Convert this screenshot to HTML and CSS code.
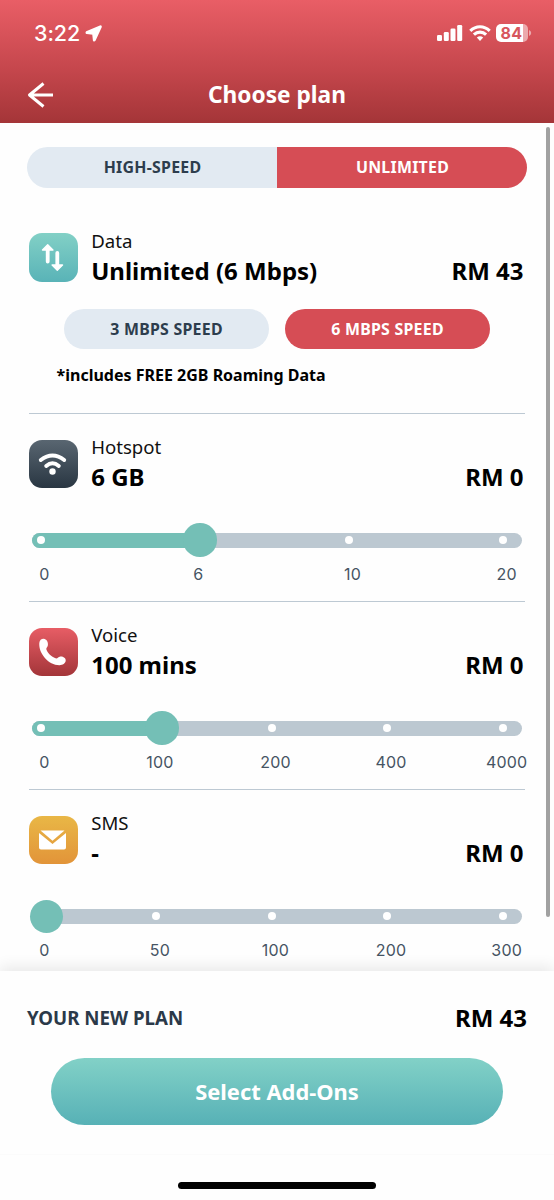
FILE: index.html
```html
<!DOCTYPE html>
<html lang="en">
<head>
<meta charset="utf-8">
<title>Choose plan</title>
<link rel="stylesheet" href="styles.css">
</head>
<body>
<div class="screen">
  <header class="header">
    <div class="status">
      <span class="time">3:22</span>
      <svg class="location" width="17" height="17" viewBox="0 0 17 17"><path d="M15.200 1.200 1.500 7Q1 8 1.800 8.300L8 9 8.700 15.300Q9.200 16.200 9.800 15.300L16 1.800Q16 1 15.200 1.200Z" fill="#fff" stroke="#fff" stroke-width="1.600" stroke-linejoin="round"/></svg>
      <svg class="signal" width="26" height="16" viewBox="0 0 26 16" fill="#fff"><rect x="0" y="10" width="5" height="6" rx="1.300"/><rect x="6.800" y="7" width="5" height="9" rx="1.300"/><rect x="13.500" y="3.500" width="5" height="12.500" rx="1.300"/><rect x="20.200" y="0" width="5" height="16" rx="1.300"/></svg>
      <svg class="wifi" width="22" height="16" viewBox="0 0 22 16"><g fill="none" stroke="#fff" stroke-width="3.100"><path d="M1.300 5.900Q5.500 1.700 11 1.700T20.700 5.900"/><path d="M4.900 9.700Q7.600 7.100 11 7.100T17.100 9.700"/></g><path d="M7.800 12.500Q11 9.900 14.200 12.500L11 15.900Z" fill="#fff"/></svg>
      <span class="battery"><span class="level">84</span></span>
      <svg class="cap" width="3" height="6" viewBox="0 0 3 6"><path d="M0 0Q2.200 1 2.200 3T0 6Z" fill="#fff" fill-opacity=".5"/></svg>
    </div>
    <div class="nav">
      <svg class="back" width="27" height="26" viewBox="0 0 27 26"><path d="M16.500 1.500 2.500 13 16.500 24.500M3 13H26" fill="none" stroke="#fff" stroke-width="3" stroke-linejoin="round"/></svg>
      <h1 class="title">Choose plan</h1>
    </div>
  </header>

  <main class="content">
    <div class="scrollbar"></div>
    <div class="toggle">
      <div class="option">HIGH-SPEED</div>
      <div class="option active">UNLIMITED</div>
    </div>

    <section class="plan data">
      <div class="row">
        <div class="icon teal">
          <svg width="48" height="48" viewBox="0 0 48 48" fill="#fff" stroke="#fff" stroke-linecap="round" stroke-linejoin="round"><path d="M18.700 28.500V15M28.300 20V33" fill="none" stroke-width="3.800"/><path d="M13.500 17 18.700 11.800 23.900 17ZM23.100 32 28.300 37.200 33.500 32Z" stroke-width="1.400"/></svg>
        </div>
        <div class="info"><span class="label">Data</span><span class="value">Unlimited (6 Mbps)</span></div>
        <span class="price">RM 43</span>
      </div>
      <div class="speeds">
        <div class="pill">3 MBPS SPEED</div>
        <div class="pill active">6 MBPS SPEED</div>
      </div>
      <p class="note">*includes FREE 2GB Roaming Data</p>
    </section>

    <section class="plan">
      <div class="row">
        <div class="icon slate">
          <svg width="48" height="48" viewBox="0 0 48 48"><g fill="none" stroke="#fff" stroke-linecap="round" stroke-width="3.900"><path d="M11.800 20Q23.500 10.800 35.200 20"/><path d="M17.200 26Q23.500 20.600 29.800 26"/></g><circle cx="23.500" cy="31.500" r="3.200" fill="#fff"/></svg>
        </div>
        <div class="info"><span class="label">Hotspot</span><span class="value">6 GB</span></div>
        <span class="price">RM 0</span>
      </div>
      <div class="track"><div class="fill" style="width:168px"></div><i class="dot"></i><i class="dot"></i><i class="dot"></i><i class="dot"></i><div class="knob" style="left:168px"></div></div>
      <div class="ticks"><span>0</span><span>6</span><span>10</span><span>20</span></div>
    </section>

    <section class="plan">
      <div class="row">
        <div class="icon red">
          <svg width="48" height="48" viewBox="0 0 48 48"><path d="M10.300 15C10.500 12 12.500 10.600 14.800 10.700C17.400 10.900 19.300 14 18.900 17C18.700 19.500 16.800 19.600 17.500 21.800C18.600 25.100 22.500 28.800 26.500 30.300C28.500 31 29.200 28.800 31.200 28.500C34 28.200 37.100 30 36.700 32.800C36.400 35.600 33.700 37.100 30.500 37.200C19.500 37.300 9.500 25.500 10.300 15Z" fill="#fff"/></svg>
        </div>
        <div class="info"><span class="label">Voice</span><span class="value">100 mins</span></div>
        <span class="price">RM 0</span>
      </div>
      <div class="track"><div class="fill" style="width:130.200px"></div><i class="dot"></i><i class="dot"></i><i class="dot"></i><i class="dot"></i><i class="dot"></i><div class="knob" style="left:130.200px"></div></div>
      <div class="ticks"><span>0</span><span>100</span><span>200</span><span>400</span><span>4000</span></div>
    </section>

    <section class="plan last">
      <div class="row">
        <div class="icon amber">
          <svg width="48" height="48" viewBox="0 0 48 48" fill="#fff"><path d="M11.500 14.500H35.500L23.500 24.800Z"/><path d="M10 17 23.500 28 37 17V31.500Q37 33.500 35 33.500H12Q10 33.500 10 31.500Z"/></svg>
        </div>
        <div class="info"><span class="label">SMS</span><span class="value">-</span></div>
        <span class="price">RM 0</span>
      </div>
      <div class="track"><i class="dot"></i><i class="dot"></i><i class="dot"></i><i class="dot"></i><i class="dot"></i><div class="knob" style="left:14.300px"></div></div>
      <div class="ticks"><span>0</span><span>50</span><span>100</span><span>200</span><span>300</span></div>
    </section>
  </main>

  <footer class="footer">
    <div class="summary"><span class="plan-title">YOUR NEW PLAN</span><span class="total">RM 43</span></div>
    <button class="cta">Select Add-Ons</button>
    <div class="home"><div class="home-bar"></div></div>
  </footer>
</div>
</body>
</html>
```

FILE: styles.css
```css
* { box-sizing: border-box; }
body { margin: 0; background: #fefefe; font-family: "Noto Sans", "Open Sans", sans-serif; color: #000; }
.screen { display: flex; flex-direction: column; width: 554px; height: 1200px; overflow: hidden; }

.header { flex: none; height: 123px; background: linear-gradient(#e95e66, #c6474d 55%, #a43538); color: #fff; }
.status { display: flex; align-items: center; height: 66px; padding-left: 34px; }
.time { width: 50px; font: 500 21.500px/26px Inter, sans-serif; letter-spacing: -0.1px; }
.location { margin-left: 1px; }
.signal { margin-left: 335px; }
.wifi { margin-left: 6px; }
.battery { display: block; width: 32px; height: 18px; margin-left: 5px; border-radius: 5px; background: linear-gradient(90deg, #fff 27px, rgba(255,255,255,.5) 27px); }
.level { display: block; width: 31px; text-align: center; font: 700 16px/18.500px Inter, sans-serif; color: #d7565d; letter-spacing: .3px; }
.cap { margin-left: 1px; }
.nav { display: flex; align-items: center; height: 57px; padding-left: 27px; }
.title { width: 446px; margin: 0; text-align: center; font-size: 22.700px; line-height: 32px; font-weight: 700; }

.content { position: relative; flex: none; height: 848px; padding: 24px 27px 0; }
.scrollbar { position: absolute; top: 4px; right: 4px; width: 4px; height: 790px; border-radius: 2px; background: #a1a1a1; }
.toggle { display: flex; height: 40.500px; border-radius: 20.500px; overflow: hidden; }
.option, .pill { flex: 1; background: #e2eaf2; color: #2d3d4d; text-align: center; font-size: 15.900px; font-weight: 700; line-height: 40.500px; letter-spacing: .25px; }
.option { padding-left: 1px; line-height: 41.500px; }
.option.active, .pill.active { background: #d64d55; color: #fff; }

.plan { height: 188.200px; margin: 0 2.300px; padding-top: 20px; border-bottom: 1.200px solid #bdc9d3; }
.plan.data { height: 186.500px; padding-top: 0; margin-top: 39.500px; }
.plan.last { border-bottom: 0; }
.row { display: flex; height: 60px; padding-right: 1.200px; }
.icon { flex: none; width: 48.500px; height: 48.500px; margin: 6px 13.400px 0 0; border-radius: 13px; }
.icon svg { display: block; }
.teal { background: linear-gradient(#82d0c6, #59b3b7); }
.slate { background: linear-gradient(#596671, #293642); }
.red { background: linear-gradient(#e75d65, #a33539); }
.amber { background: linear-gradient(#e9b746, #e29439); }
.info { display: flex; flex-direction: column; flex: 1; }
.label { font-size: 18.600px; line-height: 26px; color: #111; }
.value, .price { font-size: 24px; line-height: 34px; font-weight: 700; }
.price { margin-top: 26px; }
.data .info { padding-top: 1px; }
.data .price { margin-top: 27px; }
.speeds { display: flex; gap: 16px; margin: 22px 34.700px 0; }
.pill { height: 40.300px; border-radius: 20.500px; }
.note { margin: 13px 0 0 27.300px; font-size: 16px; font-weight: 700; line-height: 26px; }

.track { position: relative; display: flex; align-items: center; justify-content: space-between; width: 490px; height: 15px; margin: 39px 0 0 2.700px; padding: 0 15.200px 0 5px; border-radius: 8px; background: #bcc8d1; }
.fill { position: absolute; left: 0; top: 0; height: 15px; border-radius: 8px 0 0 8px; background: #74bfb6; }
.dot { position: relative; width: 8px; height: 8px; border-radius: 50%; background: #fff; }
.knob { position: absolute; top: -9.300px; width: 33.500px; height: 33.500px; margin-left: -16.750px; border-radius: 50%; background: #74bfb6; }
.ticks { display: flex; justify-content: space-between; margin: 16.300px 18px 0 15px; font: 400 16px/20px Inter, sans-serif; color: #465463; letter-spacing: .2px; }
.ticks span { display: flex; justify-content: center; width: 0; }

.footer { position: relative; flex: none; height: 229px; padding: 28px 27px 0; background: #fefefe; box-shadow: 0 -4px 14px rgba(0,0,0,.09); }
.summary { display: flex; justify-content: space-between; align-items: center; height: 36px; }
.plan-title { font-size: 18.700px; font-weight: 700; color: #2b3949; }
.total { font-size: 24px; font-weight: 700; }
.cta { display: block; width: 452px; height: 67px; margin: 23px 0 0 24px; padding: 0; border: 0; border-radius: 34px; background: linear-gradient(#82d1c7, #57b1b6); color: #fff; font: 700 21.900px/68px "Noto Sans", sans-serif; }
.home { height: 46px; margin: 29px -27px 0; padding-top: 27px; border-top: 1px solid #fbfbfb; }
.home-bar { width: 198px; height: 7px; margin: 0 auto; border-radius: 4px; background: #000; }
```
